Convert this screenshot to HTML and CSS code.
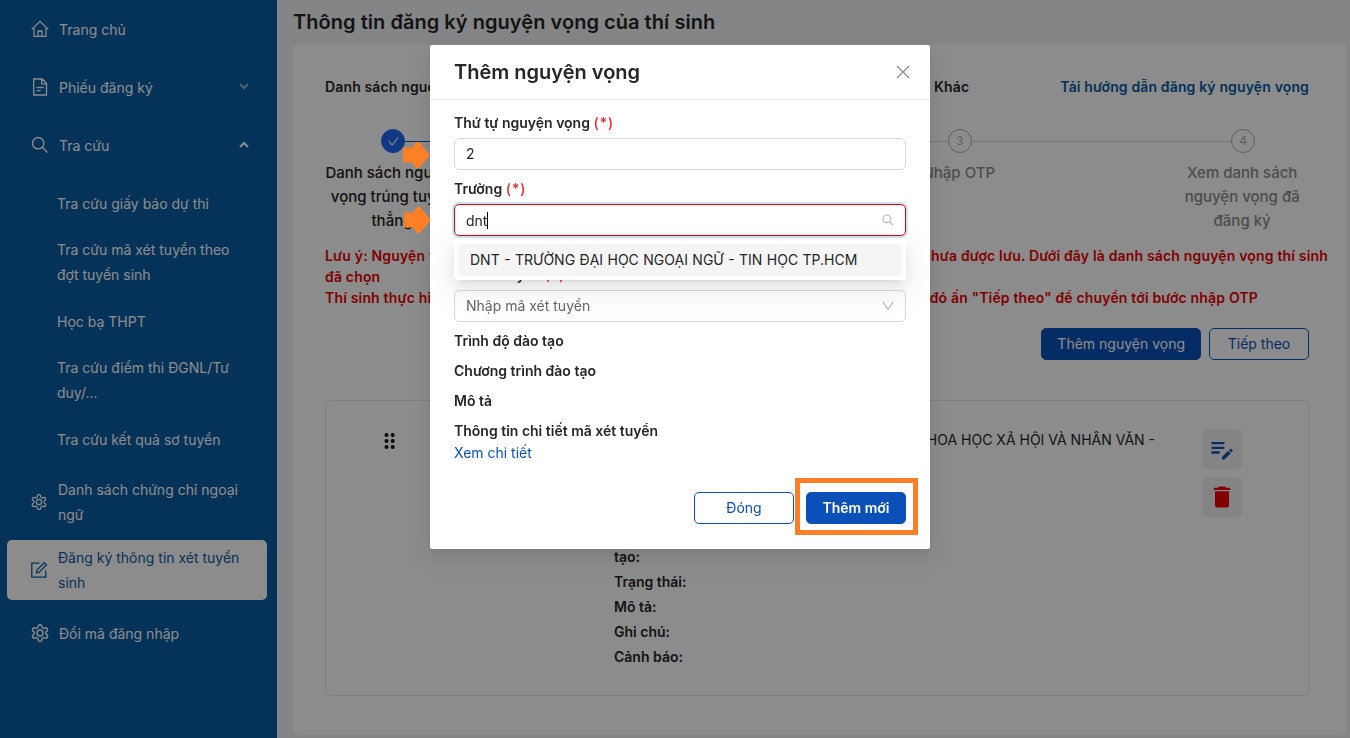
FILE: index.html
```
<!DOCTYPE html>
<html lang="vi">
<head>
    <meta charset="UTF-8">
    <title>Thông tin đăng ký nguyện vọng</title>
    <link rel="stylesheet" href="styles.css">
</head>
<body>
    <!-- Shared icons -->
    <svg class="sprite">
        <symbol id="icon-gear" viewBox="1.2 1.2 21.6 21.6">
            <path d="M12.22 2h-.44a2 2 0 0 0-2 2v.18a2 2 0 0 1-1 1.73l-.43.25a2 2 0 0 1-2 0l-.15-.08a2 2 0 0 0-2.73.73l-.22.38a2 2 0 0 0 .73 2.73l.15.1a2 2 0 0 1 1 1.72v.51a2 2 0 0 1-1 1.74l-.15.09a2 2 0 0 0-.73 2.73l.22.38a2 2 0 0 0 2.73.73l.15-.08a2 2 0 0 1 2 0l.43.25a2 2 0 0 1 1 1.73V20a2 2 0 0 0 2 2h.44a2 2 0 0 0 2-2v-.18a2 2 0 0 1 1-1.73l.43-.25a2 2 0 0 1 2 0l.15.08a2 2 0 0 0 2.73-.73l.22-.39a2 2 0 0 0-.73-2.73l-.15-.08a2 2 0 0 1-1-1.74v-.5a2 2 0 0 1 1-1.74l.15-.09a2 2 0 0 0 .73-2.73l-.22-.38a2 2 0 0 0-2.73-.73l-.15.08a2 2 0 0 1-2 0l-.43-.25a2 2 0 0 1-1-1.73V4a2 2 0 0 0-2-2z"/>
            <circle cx="12" cy="12" r="3.6"/>
        </symbol>
        <symbol id="icon-search" viewBox="0 0 18 18">
            <circle cx="7.2" cy="7.2" r="5.7"/>
            <path d="M11.3 11.3l5.2 5.2"/>
        </symbol>
        <symbol id="icon-arrow" viewBox="0 0 26 26">
            <path d="M0 5.5h10V4l3-4h3l10 12v2L16 26h-3l-3-4v-1.5H0z"/>
        </symbol>
    </svg>

    <div class="layout">
        <nav class="sidebar">
            <a class="menu-item">
                <svg class="icon" viewBox="0 0 18 18"><path d="M.7 9.4L9 1.4l8.3 8M3 8v8.4h12V8M7 16.4V11h4v5.4"/></svg>
                <span>Trang chủ</span>
            </a>
            <a class="menu-item">
                <svg class="icon" viewBox="0 0 18 18"><path d="M2.7 1h8.6l4.2 4.2V17H2.7zM10.7 1v4.8h4.8M5.5 9.5h7.2M5.5 12.6h4"/></svg>
                <span>Phiếu đăng ký</span>
                <svg class="caret faded" viewBox="0 0 10 10"><path d="M1 2l4 4 4-4"/></svg>
            </a>
            <a class="menu-item">
                <svg class="icon"><use href="#icon-search"/></svg>
                <span>Tra cứu</span>
                <svg class="caret" viewBox="0 0 10 10"><path d="M1 7l4-4 4 4"/></svg>
            </a>
            <div class="submenu">
                <a>Tra cứu giấy báo dự thi</a>
                <a>Tra cứu mã xét tuyển theo đợt tuyển sinh</a>
                <a>Học bạ THPT</a>
                <a>Tra cứu điểm thi ĐGNL/Tư duy/...</a>
                <a>Tra cứu kết quả sơ tuyển</a>
            </div>
            <a class="menu-item tall">
                <svg class="icon"><use href="#icon-gear"/></svg>
                <span>Danh sách chứng chỉ ngoại ngữ</span>
            </a>
            <a class="menu-item tall active">
                <svg class="icon" viewBox="1 1 16 16"><path d="M9.5 2.2H1.8v14h14V9.5M6.5 11.8l.5-2.8 7.2-7.2 2.2 2.2-7.2 7.2z"/></svg>
                <span>Đăng ký thông tin xét tuyển sinh</span>
            </a>
            <a class="menu-item">
                <svg class="icon"><use href="#icon-gear"/></svg>
                <span class="lower">Đổi mã đăng nhập</span>
            </a>
        </nav>

        <main class="main">
            <h1>Thông tin đăng ký nguyện vọng của thí sinh</h1>
            <div class="card">
                <div class="links">
                    <span class="link-first">Danh sách nguồn tuyển</span>
                    <span>Khác</span>
                    <a class="guide">Tải hướng dẫn đăng ký nguyện vọng</a>
                </div>

                <div class="steps">
                    <div class="step done">
                        <div class="step-icon">
                            <svg viewBox="0 0 1024 1024"><path d="M912 190h-69.9c-9.8 0-19.1 4.5-25.1 12.2L404.7 724.5 207 474a32 32 0 00-25.1-12.2H112c-6.7 0-10.4 7.7-6.3 12.9l273.9 347c12.8 16.2 37.4 16.2 50.3 0l488.4-618.9c4.1-5.1.4-12.8-6.3-12.8z"/></svg>
                        </div>
                        <div class="step-title">Danh sách nguyện vọng trúng tuyển thẳng</div>
                    </div>
                    <div class="step-line blue"></div>
                    <div class="step">
                        <div class="step-icon">2</div>
                        <div class="step-title">Nguyện vọng</div>
                    </div>
                    <div class="step-line"></div>
                    <div class="step">
                        <div class="step-icon">3</div>
                        <div class="step-title">Nhập OTP</div>
                    </div>
                    <div class="step-line"></div>
                    <div class="step">
                        <div class="step-icon">4</div>
                        <div class="step-title">Xem danh sách nguyện vọng đã đăng ký</div>
                    </div>
                </div>

                <div class="note">
                    <div class="note-line"><span>Lưu ý: Nguyện vọng mới</span><span>chưa được lưu. Dưới đây là danh sách nguyện vọng thí sinh</span></div>
                    <div class="note-line">đã chọn</div>
                    <div class="note-line short"><span>Thí sinh thực hiện thêm</span><span>sau đó ấn "Tiếp theo" để chuyển tới bước nhập OTP</span></div>
                </div>

                <div class="actions">
                    <button class="btn primary">Thêm nguyện vọng</button>
                    <button class="btn">Tiếp theo</button>
                </div>

                <div class="wish">
                    <svg class="drag" viewBox="0 0 12 18">
                        <circle cx="2.5" cy="3" r="2"/><circle cx="8.7" cy="3" r="2"/>
                        <circle cx="2.5" cy="9" r="2"/><circle cx="8.7" cy="9" r="2"/>
                        <circle cx="2.5" cy="15" r="2"/><circle cx="8.7" cy="15" r="2"/>
                    </svg>
                    <div class="wish-labels">
                        <div>Trường:</div>
                        <div>Mã xét tuyển:</div>
                        <div>Chương trình đào tạo:</div>
                        <div>Trạng thái:</div>
                        <div>Mô tả:</div>
                        <div>Ghi chú:</div>
                        <div>Cảnh báo:</div>
                    </div>
                    <div class="wish-school">TRƯỜNG ĐẠI HỌC KHOA HỌC XÃ HỘI VÀ NHÂN VĂN -</div>
                    <div class="wish-tools">
                        <button class="tool edit"><svg viewBox="0 0 24 24"><path d="M3 10h11v2H3v-2zm0-2h11V6H3v2zm0 8h7v-2H3v2zm15.01-3.13.71-.71c.39-.39 1.02-.39 1.41 0l.71.71c.39.39.39 1.02 0 1.41l-.71.71-2.12-2.12zm-.71.71-5.3 5.3V21h2.12l5.3-5.3-2.12-2.12z"/></svg></button>
                        <button class="tool delete"><svg viewBox="0 0 24 24"><path d="M6 19c0 1.1.9 2 2 2h8c1.1 0 2-.9 2-2V7H6v12zM19 4h-3.5l-1-1h-5l-1 1H5v2h14V4z"/></svg></button>
                    </div>
                </div>
            </div>
        </main>
    </div>

    <!-- Add wish dialog -->
    <div class="mask">
        <div class="modal">
            <div class="modal-header">
                <h2>Thêm nguyện vọng</h2>
                <svg class="close" viewBox="0 0 14 14"><path d="M1 1l12 12M13 1L1 13"/></svg>
            </div>
            <div class="modal-body">
                <label>Thứ tự nguyện vọng <span class="required">(*)</span></label>
                <div class="field">2</div>
                <label>Trường <span class="required">(*)</span></label>
                <div class="field focused">
                    <span class="typed">dnt</span>
                    <svg class="field-icon"><use href="#icon-search"/></svg>
                    <div class="dropdown">
                        <div class="option">DNT - TRƯỜNG ĐẠI HỌC NGOẠI NGỮ - TIN HỌC TP.HCM</div>
                    </div>
                </div>
                <label>Mã xét tuyển <span class="required">(*)</span></label>
                <div class="field placeholder">
                    Nhập mã xét tuyển
                    <svg class="field-icon" viewBox="0 0 12 12"><path d="M1 2l5 7.5L11 2"/></svg>
                </div>
                <div class="info">Trình độ đào tạo</div>
                <div class="info">Chương trình đào tạo</div>
                <div class="info">Mô tả</div>
                <div class="info">Thông tin chi tiết mã xét tuyển</div>
                <a class="detail">Xem chi tiết</a>
            </div>
            <div class="modal-footer">
                <button class="btn">Đóng</button>
                <button class="btn primary strong">Thêm mới</button>
            </div>
            <svg class="pointer first"><use href="#icon-arrow"/></svg>
            <svg class="pointer second"><use href="#icon-arrow"/></svg>
            <div class="highlight"></div>
        </div>
    </div>
</body>
</html>
```
FILE: styles.css
```
* {
    box-sizing: border-box;
}
body {
    margin: 0;
    height: 738px;
    overflow: hidden;
    background: #f0f2f5;
    color: #262626;
    font-family: Inter, "Noto Sans", sans-serif;
    font-size: 14px;
    line-height: 22px;
}
.sprite {
    display: none;
}
.layout {
    display: flex;
    height: 738px;
}

/* Sidebar */
.sidebar {
    width: 277px;
    flex: none;
    padding: 4px 10px 0 7px;
    background: #095ba3;
    color: #fff;
    line-height: 25px;
}
.menu-item {
    display: flex;
    align-items: center;
    height: 50px;
    margin-bottom: 8px;
    padding: 0 18px 0 24px;
    border-radius: 5px;
}
.menu-item span {
    flex: 1;
    margin-left: 10px;
}
.menu-item .lower {
    padding-top: 2px;
}
.menu-item.tall {
    height: 60px;
}
.menu-item.tall .icon {
    width: 16px;
    height: 16px;
}
.menu-item.tall span {
    margin-left: 11px;
}
.menu-item.active {
    background: #fff;
    color: #095ba3;
}
.icon {
    flex: none;
    width: 18px;
    height: 18px;
    fill: none;
    stroke: currentColor;
    stroke-width: 1.3;
}
.icon use[href="#icon-gear"] {
    stroke-width: 1.7;
}
.caret {
    width: 10px;
    height: 10px;
    fill: none;
    stroke: #fff;
    stroke-width: 2;
}
.caret.faded {
    opacity: 0.5;
}
.submenu {
    display: flex;
    flex-direction: column;
    gap: 21.5px;
    padding: 12.5px 30px 20px 50px;
}

/* Content */
.main {
    flex: 1;
    min-width: 0;
    padding: 9px 4px 0 16px;
}
h1 {
    margin: 0 0 9px;
    font-size: 20px;
    font-weight: 600;
    line-height: 26px;
    letter-spacing: 0.04px;
}
.card {
    height: 691px;
    padding: 32px 37px 0 32px;
    background: #fff;
    border-radius: 5px;
}
.links {
    display: flex;
    font-weight: 600;
    letter-spacing: 0.14px;
}
.link-first {
    width: 609px;
}
.guide {
    margin-left: auto;
    color: #095ba3;
}
.steps {
    display: flex;
    width: 986px;
    margin-top: 31px;
}
.step {
    width: 24px;
    flex: none;
    color: #8c8c8c;
}
.step-icon {
    display: flex;
    align-items: center;
    justify-content: center;
    width: 24px;
    height: 24px;
    border: 1px solid #b0b0b0;
    border-radius: 50%;
    color: #b0b0b0;
    font-size: 12px;
}
.step-title {
    width: 136px;
    margin: 8px 0 0 -57px;
    font-size: 15px;
    font-weight: 500;
    line-height: 24px;
    text-align: center;
}
.step.done {
    margin-left: 56px;
    color: #222;
}
.step.done .step-icon {
    background: #1f66f0;
    border-color: #1f66f0;
}
.step-icon svg {
    width: 13px;
    flex: none;
    fill: #fff;
}
.step-line {
    flex: none;
    width: 259.4px;
    height: 1px;
    margin-top: 12px;
    background: #d9d9d9;
}
.step-line.blue {
    background: #0b50b8;
}
.note {
    width: 1003px;
    margin-top: 12px;
    color: #eb0000;
    font-weight: 600;
    line-height: 21px;
    letter-spacing: 0.17px;
}
.note-line {
    display: flex;
    justify-content: space-between;
}
.note-line.short {
    width: 933px;
}
.actions {
    display: flex;
    justify-content: flex-end;
    gap: 8px;
    margin-top: 20px;
}
.btn {
    min-width: 100px;
    height: 32px;
    padding: 0 15px;
    border: 1px solid #0b50b8;
    border-radius: 5px;
    background: #fff;
    color: #0b50b8;
    font: inherit;
}
.btn.primary {
    background: #0b50b8;
    color: #fff;
}
.btn.strong {
    font-weight: 600;
}
.wish {
    display: flex;
    height: 296px;
    margin-top: 40px;
    padding-top: 28px;
    border: 1px solid #e8e8e8;
    border-radius: 5px;
    line-height: 25px;
}
.drag {
    flex: none;
    width: 12px;
    height: 18px;
    margin: 3px 0 0 58px;
    fill: #111;
}
.wish-labels {
    flex: none;
    width: 130px;
    margin-left: 218px;
    padding-bottom: 26px;
    align-self: flex-end;
    font-weight: 600;
}
.wish-school {
    flex: 1;
    margin-top: -2px;
    text-align: right;
}
.wish-tools {
    display: flex;
    flex-direction: column;
    gap: 8px;
    margin: 0 66px 0 47px;
}
.tool {
    display: flex;
    align-items: center;
    justify-content: center;
    width: 40px;
    height: 40px;
    padding: 0;
    border: 0;
    border-radius: 5px;
    background: #f0f0f0;
}
.tool svg {
    width: 28px;
}
.tool.edit svg {
    fill: #0b50b8;
}
.tool.delete svg {
    fill: #eb0000;
}

/* Dialog */
.mask {
    position: fixed;
    inset: 0;
    padding-top: 45px;
    background: rgba(0, 0, 0, 0.45);
}
.modal {
    position: relative;
    width: 500px;
    height: 504px;
    margin: 0 auto 0 430px;
    background: #fff;
    border-radius: 2px;
    box-shadow: 0 3px 6px -4px rgba(0, 0, 0, 0.12), 0 6px 16px rgba(0, 0, 0, 0.08), 0 9px 28px 8px rgba(0, 0, 0, 0.05);
}
.modal-header {
    display: flex;
    align-items: center;
    justify-content: space-between;
    height: 55px;
    padding: 0 20px 0 24px;
    border-bottom: 1px solid #f0f0f0;
}
h2 {
    margin: 0;
    font-size: 20px;
    font-weight: 600;
}
.close {
    width: 14px;
    height: 14px;
    fill: none;
    stroke: #8c8c8c;
    stroke-width: 1.3;
}
.modal-body {
    padding: 12px 24px 0;
}
label {
    display: block;
    margin-bottom: 4px;
    font-weight: 600;
}
.required {
    color: #f5222d;
    font-weight: 500;
    letter-spacing: 1px;
}
.field {
    position: relative;
    display: flex;
    align-items: center;
    justify-content: space-between;
    height: 32px;
    margin-bottom: 8px;
    padding: 0 11px;
    border: 1px solid #d9d9d9;
    border-radius: 5px;
}
.field.focused {
    margin-bottom: 28px;
    border-color: #e60000;
    box-shadow: 0 0 0 2px #cce4fb;
}
.field.placeholder {
    color: #666;
}
.typed {
    border-right: 1px solid #000;
    line-height: 17px;
}
.field-icon {
    width: 12px;
    height: 12px;
    fill: none;
    stroke: #b5b5b5;
    stroke-width: 1.2;
}
.field-icon use {
    stroke-width: 1.7;
}
.dropdown {
    position: absolute;
    top: 35px;
    left: -1px;
    right: -1px;
    z-index: 1;
    padding: 4px;
    background: #fff;
    border-radius: 2px;
    box-shadow: 0 3px 6px -4px rgba(0, 0, 0, 0.12), 0 6px 16px rgba(0, 0, 0, 0.08), 0 9px 28px 8px rgba(0, 0, 0, 0.05);
}
.option {
    padding: 5px 12px;
    background: #f5f5f5;
    word-spacing: 0.5px;
}
.info {
    margin-bottom: 8px;
    font-weight: 600;
}
.info:last-of-type {
    margin-bottom: 0;
}
.detail {
    display: block;
    color: #0b50b8;
}
.modal-footer {
    display: flex;
    justify-content: flex-end;
    gap: 12px;
    padding: 28px 24px 0;
}
.pointer {
    position: absolute;
    width: 26px;
    height: 26px;
    fill: #ff7f27;
}
.pointer.first {
    top: 97px;
    left: -27px;
}
.pointer.second {
    top: 162px;
    left: -26px;
}
.highlight {
    position: absolute;
    top: 433px;
    left: 365px;
    width: 123px;
    height: 57px;
    border: 5px solid #ff7f27;
}
```
